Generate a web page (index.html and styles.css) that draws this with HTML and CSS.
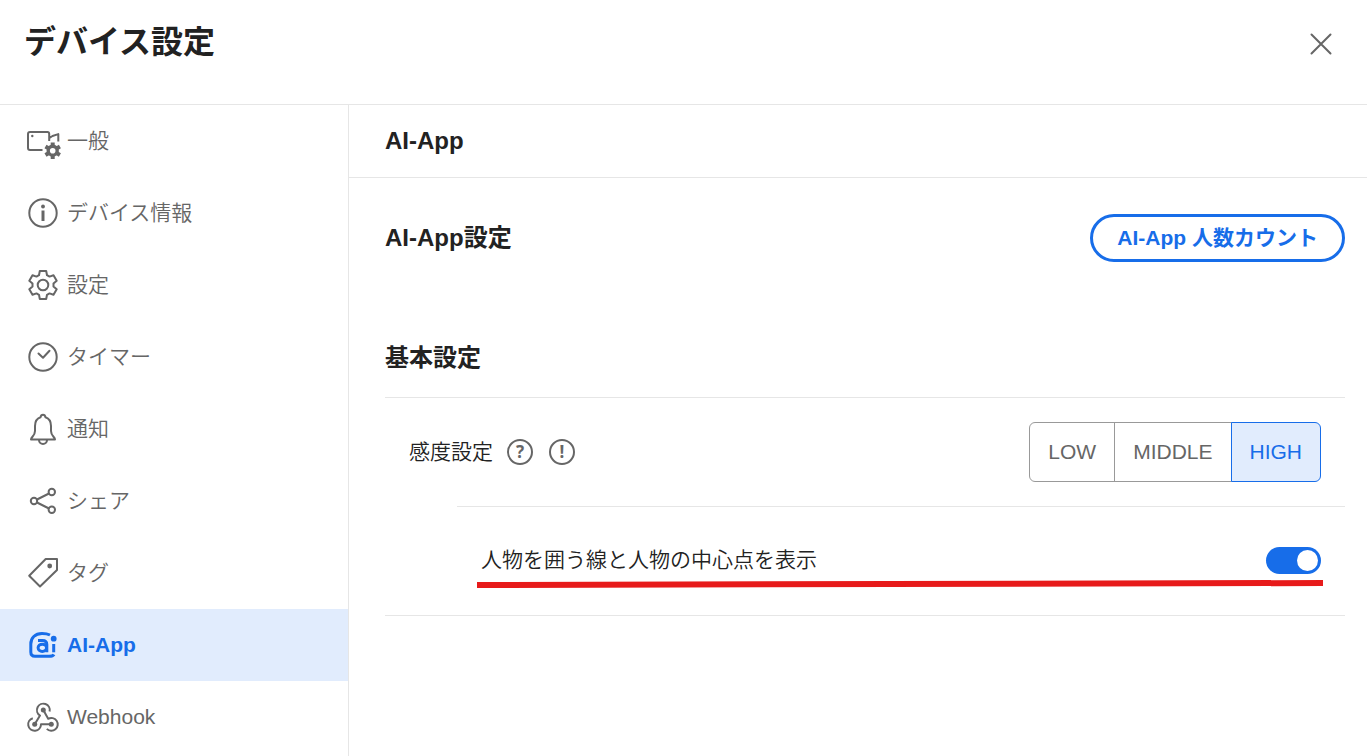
FILE: index.html
```html
<!DOCTYPE html>
<html lang="ja">
<head>
    <meta charset="UTF-8">
    <meta name="viewport" content="width=device-width, initial-scale=1">
    <title>デバイス設定</title>
    <link rel="stylesheet" href="styles.css">
</head>
<body>
<header class="header">
    <h1>デバイス設定</h1>
    <button type="button" class="close" aria-label="閉じる">
        <svg viewBox="0 0 24 24"><path d="M2.500 2.500l19 19M21.500 2.500l-19 19"/></svg>
    </button>
</header>
<div class="container">
    <nav class="side">
        <ul>
            <li><a href="#general">
                <svg class="icon" viewBox="0 0 36 36">
                    <path d="M17.500 27H5q-2 0-2-2V11q0-2 2-2h17.500q1.700 0 1.700 2v7M24.500 14.800l3-1.800 5.800-1.900v7.400"/>
                    <circle class="fill" cx="7.300" cy="13" r="1.200"/>
                    <circle cx="27.700" cy="27.700" r="4.500" stroke-width="3.400"/>
                    <path class="teeth" d="M27.700 22.700v-3.300M27.700 32.700v3.300M32 25.200l2.900-1.700M23.400 30.200l-2.900 1.700M32 30.200l2.900 1.700M23.400 25.200l-2.900-1.700"/>
                </svg>
                <span>一般</span></a></li>
            <li><a href="#info">
                <svg class="icon" viewBox="0 0 36 36">
                    <circle cx="18" cy="18" r="13.700"/>
                    <circle class="fill" cx="18" cy="11.500" r="1.900"/>
                    <path class="bold" d="M18 15.500v10.500"/>
                </svg>
                <span>デバイス情報</span></a></li>
            <li><a href="#setting">
                <svg class="icon" viewBox="0 0 36 36">
                    <path d="M14.800 4L21.200 4 22 8.200 24.500 9.600 28.500 8.200 31.700 13.800 28.500 16.600 28.500 19.400 31.700 22.200 28.500 27.800 24.500 26.400 22 27.800 21.200 32 14.800 32 14 27.800 11.500 26.400 7.500 27.800 4.300 22.200 7.500 19.400 7.500 16.600 4.300 13.800 7.500 8.200 11.500 9.600 14 8.200z"/>
                    <circle cx="18" cy="18" r="5.300"/>
                </svg>
                <span>設定</span></a></li>
            <li><a href="#timer">
                <svg class="icon" viewBox="0 0 36 36">
                    <circle cx="18" cy="18" r="13.700"/>
                    <path stroke-linecap="round" d="M13.500 14.500l4.500 4.200 6.500-7"/>
                </svg>
                <span>タイマー</span></a></li>
            <li><a href="#notice">
                <svg class="icon" viewBox="0 0 36 36">
                    <path d="M6 28.500C6 26 10 25 10 20V15C10 10 12 7.500 15.500 6.300 15.800 4.500 16.600 3.700 18 3.700S20.200 4.500 20.500 6.300C24 7.500 26 10 26 15V20C26 25 30 26 30 28.500z"/>
                    <path d="M14 29a4 4 0 0 0 8 0"/>
                </svg>
                <span>通知</span></a></li>
            <li><a href="#share">
                <svg class="icon" viewBox="0 0 36 36">
                    <circle cx="9" cy="18" r="3.200"/>
                    <circle cx="26.800" cy="9" r="3.200"/>
                    <circle cx="26.800" cy="26.800" r="3.200"/>
                    <path d="M12 16.500l12-6M12 19.500l12 6"/>
                </svg>
                <span>シェア</span></a></li>
            <li><a href="#tag">
                <svg class="icon" viewBox="0 0 36 36">
                    <path d="M20.700 4H32V15L15 31.500 4.200 20.700z"/>
                    <circle class="fill" cx="24.700" cy="11" r="2.400"/>
                </svg>
                <span>タグ</span></a></li>
            <li><a href="#ai-app" class="active" aria-current="page">
                <svg class="icon" viewBox="0 0 36 36">
                    <path class="bold" d="M25 8C22 6.500 20 6.500 17 6.500 10 6.500 5.800 11 5.800 17V25Q5.800 29.300 10 29.300H24Q28 29.300 29 27.500"/>
                    <path class="bold" d="M13 13.500H17.500Q21.800 13.500 21.800 17.500V25.200"/>
                    <ellipse class="bold" cx="17.300" cy="20.800" rx="4.200" ry="3.600"/>
                    <circle class="fill" cx="28.700" cy="11.700" r="2.900"/>
                    <path class="bold" d="M28.700 17v8.300"/>
                </svg>
                <span>AI-App</span></a></li>
            <li><a href="#webhook">
                <svg class="icon" viewBox="0 0 36 36">
                    <path d="M24.600 12.500A6.400 6.400 0 1 0 15 16.500L9.700 25.300"/>
                    <path d="M7.800 19.200A6.400 6.400 0 1 0 16 25.300H26.300"/>
                    <path d="M21.800 29.900A6.400 6.400 0 1 0 23.200 19.800L18.300 11"/>
                    <circle class="fill" cx="18.300" cy="11" r="2.500"/>
                    <circle class="fill" cx="9.700" cy="25.300" r="2.500"/>
                    <circle class="fill" cx="26.300" cy="25.300" r="2.500"/>
                </svg>
                <span>Webhook</span></a></li>
        </ul>
    </nav>
    <main class="main">
        <h2 class="main-title">AI-App</h2>
        <div class="content">
            <div class="app-row">
                <h3>AI-App設定</h3>
                <button type="button" class="app-btn">AI-App 人数カウント</button>
            </div>
            <section class="basic">
                <h3>基本設定</h3>
                <div class="row">
                    <div class="label">
                        <span id="sense">感度設定</span>
                        <div class="hints">
                            <button type="button" class="hint">?</button>
                            <button type="button" class="hint">!</button>
                        </div>
                    </div>
                    <div class="segment" role="radiogroup" aria-labelledby="sense">
                        <input type="radio" name="sense" id="low"><label for="low">LOW</label>
                        <input type="radio" name="sense" id="middle"><label for="middle">MIDDLE</label>
                        <input type="radio" name="sense" id="high" checked><label for="high">HIGH</label>
                    </div>
                </div>
                <div class="row sub">
                    <label for="frame">人物を囲う線と人物の中心点を表示</label>
                    <input type="checkbox" id="frame" class="toggle" checked>
                    <svg class="underline" viewBox="0 0 846 10" preserveAspectRatio="none"><path d="M0 6L846 4"/></svg>
                </div>
            </section>
        </div>
    </main>
</div>
</body>
</html>
```
FILE: styles.css
```css
*{ margin:0; padding:0; box-sizing:border-box;}
body{ min-height:100vh; display:flex; flex-direction:column; background:#fff; color:#222; font:21px/36px "Liberation Sans", "Noto Sans CJK JP", sans-serif; font-weight:350;}
ul{ list-style:none;}
button{ font:inherit; background:none; border:none; cursor:pointer;}

.header{ display:flex; justify-content:space-between; align-items:flex-end; padding:18px 34px 38px 24px; border-bottom:1px solid #e6e6e6;}
.header h1{ font-size:32px; line-height:48px; font-weight:bold;}
.close{ width:24px; height:44px;}
.close svg{ display:block; width:24px; height:24px; stroke:#666; stroke-width:2; stroke-linecap:round;}

.container{ flex:1; display:flex;}
.side{ flex:none; width:349px; height:calc(100vh - 105px); overflow:hidden; border-right:1px solid #e6e6e6;}
.side a{ display:flex; align-items:center; gap:6px; height:72px; padding-left:25px; color:#666; text-decoration:none;}
.side .active{ background:#e1ecfd; color:#176de9; font-weight:bold;}
.icon{ width:36px; height:36px; fill:none; stroke:currentColor; stroke-width:2; stroke-linejoin:round;}
.icon .fill{ fill:currentColor; stroke:none;}
.icon .bold{ stroke-width:3;}
.icon .teeth{ stroke-width:4;}

.main{ flex:1;}
.main-title{ padding:18px 36px; font-size:24px; line-height:36px; border-bottom:1px solid #e6e6e6;}
.content{ padding:36px 22px 36px 36px;}
.content h3{ font-size:24px; line-height:48px;}
.app-row{ display:flex; justify-content:space-between; align-items:center;}
.app-btn{ height:48px; padding:0 24px; border:3px solid #176de9; border-radius:24px; color:#176de9; font-weight:bold;}

.basic{ margin-top:72px; border-bottom:1px solid #e6e6e6;}
.basic h3{ padding-bottom:15px; border-bottom:1px solid #e6e6e6;}
.row{ display:flex; justify-content:space-between; align-items:center; height:108px; padding:0 24px;}
.label{ display:flex; align-items:center; gap:14px;}
.hints{ display:flex; gap:16px;}
.hint{ width:26px; height:26px; border:2px solid #666; border-radius:50%; color:#666; font:bold 17px/22px "Noto Sans", sans-serif;}
.sub{ position:relative; height:109px; margin-left:72px; padding-bottom:2px; border-top:1px solid #e6e6e6;}

.segment{ display:flex; color:#666;}
.segment input{ position:absolute; opacity:0;}
.segment label{ height:60px; padding:0 18px; border:1px solid #999; line-height:58px; margin-left:-1px; cursor:pointer;}
.segment label:first-of-type{ border-radius:6px 0 0 6px;}
.segment label:last-of-type{ border-radius:0 6px 6px 0;}
.segment input:checked + label{ background:#e1ecfd; border-color:#176de9; color:#176de9; z-index:1;}

.toggle{ appearance:none; display:flex; justify-content:flex-end; width:55px; height:27px; padding:3px; border-radius:14px; background:#176de9; cursor:pointer;}
.toggle::before{ content:""; width:21px; height:21px; border-radius:50%; background:#fff;}
.toggle:not(:checked){ justify-content:flex-start; background:#999;}
.underline{ position:absolute; left:20px; bottom:26px; width:calc(100% - 42px); height:10px; stroke:#e71a1a; stroke-width:6;}
```
